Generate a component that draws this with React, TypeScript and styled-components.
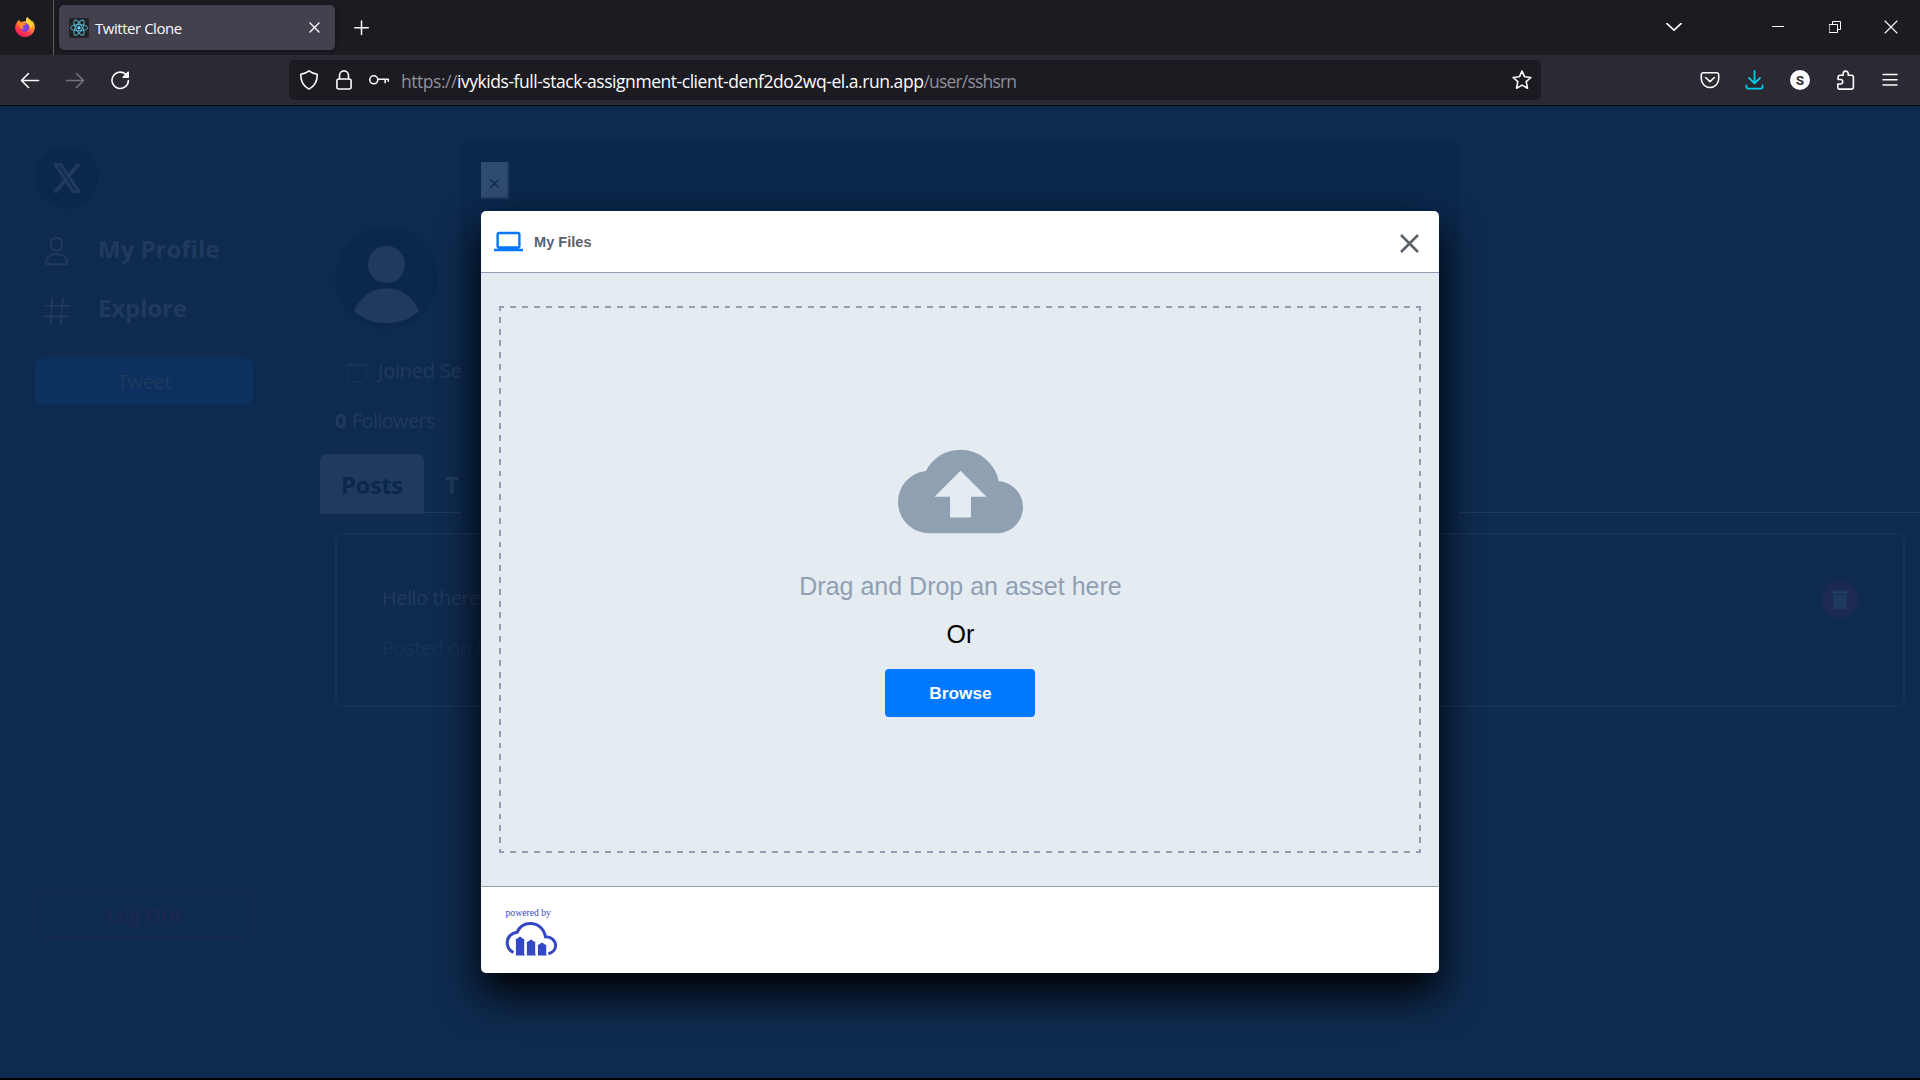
import React from "react";
import styled, { createGlobalStyle } from "styled-components";
import { MdCloudUpload, MdLaptop } from "react-icons/md";

const ui = `"Open Sans", "Noto Sans", sans-serif`;
const arial = `"Liberation Sans", Arial, sans-serif`;

const Global = createGlobalStyle`
  *, *::before, *::after { box-sizing: border-box; }
  body { margin: 0; background: #000; overflow: hidden; }
  svg { display: block; flex: none; }
  button { font: inherit; }
`;

const Screen = styled.div`
  width: 1920px;
  height: 1080px;
  display: flex;
  flex-direction: column;
  font-family: ${ui};
  overflow: hidden;
`;

/* ---------- browser chrome ---------- */
const TabStrip = styled.div`
  height: 55px;
  flex: none;
  display: flex;
  align-items: center;
  background: #1c1b22;
  color: #fbfbfe;
`;
const AppBadge = styled.div`
  width: 54px;
  height: 55px;
  padding: 17px 0 0 15px;
  border-right: 1px solid #5b5a63;
`;
const Tab = styled.div`
  width: 276px;
  height: 45px;
  margin-left: 5px;
  padding: 0 15px 0 10px;
  display: flex;
  align-items: center;
  border-radius: 5px;
  background: #42414d;
  box-shadow: 0 0 4px rgba(0, 0, 0, 0.45);
`;
const TabTitle = styled.span`
  flex: 1;
  padding-left: 6px;
  font-size: 15px;
  line-height: 20px;
  letter-spacing: -0.46px;
`;
const NewTab = styled.div`
  margin-left: 19px;
  flex: 1;
`;
const WindowButtons = styled.div`
  display: flex;
  align-items: center;
  padding-right: 20px;
`;
const Slot = styled.div<{ $gap?: number }>`
  margin-right: ${(p) => p.$gap ?? 0}px;
`;
const Toolbar = styled.div`
  height: 51px;
  flex: none;
  display: flex;
  align-items: center;
  padding: 0 20px;
  background: #2b2a33;
  border-bottom: 1px solid #0c0c12;
  color: #fbfbfe;
`;
const NavButtons = styled.div`
  width: 269px;
  display: flex;
  gap: 25px;
`;
const AddressBar = styled.div`
  width: 1252px;
  height: 40px;
  padding: 0 9px 0 10px;
  display: flex;
  align-items: center;
  border-radius: 5px;
  background: #1c1b22;
`;
const SiteIcons = styled.div`
  display: flex;
  gap: 15px;
  align-items: center;
`;
const Address = styled.span`
  flex: 1;
  margin-left: 12px;
  padding-top: 2px;
  font-size: 17.5px;
  line-height: 24px;
  letter-spacing: -0.46px;
  color: #8f8f98;
  white-space: nowrap;
`;
const Host = styled.span`
  color: #fbfbfe;
`;
const UrlPath = styled.span`
  letter-spacing: -0.8px;
`;
const Extensions = styled.div`
  flex: 1;
  display: flex;
  justify-content: flex-end;
  gap: 25px;
`;

/* ---------- dimmed page ---------- */
const Page = styled.div`
  position: relative;
  height: 972px;
  display: flex;
  background: #0e2a4e;
  color: #203a5e;
  overflow: hidden;
`;
const Sidebar = styled.nav`
  width: 320px;
  padding: 40px 67px 0 35px;
  display: flex;
  flex-direction: column;
`;
const LogoDisc = styled.div`
  width: 63px;
  height: 63px;
  display: grid;
  place-items: center;
  border-radius: 50%;
  background: #0b274c;
`;
const NavList = styled.div`
  margin-top: 19px;
  display: flex;
  flex-direction: column;
  gap: 19px;
`;
const NavItem = styled.div<{ $tracking: number }>`
  height: 40px;
  display: flex;
  align-items: center;
  padding-left: 8px;
  gap: 27px;
  font-size: 24px;
  font-weight: 700;
  letter-spacing: ${(p) => p.$tracking}px;
  svg {
    margin-top: 6px;
  }
`;
const SideButton = styled.button<{ $outlined?: boolean }>`
  width: 218px;
  height: 47px;
  flex: none;
  margin: ${(p) => (p.$outlined ? "auto 0 141px" : "30px 0 0")};
  padding: ${(p) => (p.$outlined ? "1px 0 0" : "2px 0 0")};
  border-radius: 7px;
  border: 1px solid ${(p) => (p.$outlined ? "#1b2950" : "#0c3060")};
  background: ${(p) => (p.$outlined ? "transparent" : "#0c3060")};
  color: ${(p) => (p.$outlined ? "#1b2950" : "#203a5e")};
  font-size: 20px;
  font-weight: ${(p) => (p.$outlined ? 700 : 400)};
  letter-spacing: ${(p) => (p.$outlined ? -0.2 : -0.4)}px;
`;
const Main = styled.main`
  flex: 1;
  padding-top: 120px;
`;
const ProfileHead = styled.section`
  padding-left: 15px;
  font-size: 20px;
  line-height: 28px;
`;
const Joined = styled.div`
  margin-top: 28px;
  padding-left: 12px;
  display: flex;
  gap: 11px;
  letter-spacing: -0.22px;
  svg {
    margin-top: 6px;
  }
`;
const Followers = styled.div`
  margin-top: 22px;
  letter-spacing: -0.65px;
  b {
    margin-right: 1.5px;
  }
`;
const Tabs = styled.div`
  margin-top: 19px;
  height: 60px;
  display: flex;
  font-size: 24px;
  font-weight: 700;
  line-height: 61px;
  background: linear-gradient(#203a5e, #203a5e) 0 58px / 100% 1px no-repeat;
`;
const TabItem = styled.div<{ $active?: boolean }>`
  padding: 0 21px;
  width: ${(p) => (p.$active ? "104px" : "auto")};
  border-radius: 7px 7px 0 0;
  background: ${(p) => (p.$active ? "#203a5e" : "transparent")};
  color: ${(p) => (p.$active ? "#0b274c" : "#203a5e")};
  letter-spacing: ${(p) => (p.$active ? -0.5 : 3)}px;
`;
const Post = styled.article`
  margin: 19px 15px 0;
  height: 174px;
  padding: 45px 45px 0;
  display: flex;
  justify-content: space-between;
  border: 2px solid #163257;
  border-radius: 8px;
  font-size: 20px;
  line-height: 50px;
  letter-spacing: -0.5px;
`;
const PostText = styled.div`
  margin-top: -7.500px;
`;
const PostDate = styled.div`
  color: #163257;
`;
const DeleteButton = styled.div`
  width: 37px;
  height: 39px;
  display: grid;
  place-items: center;
  border-radius: 50%;
  background: #1c2a52;
`;

/* ---------- stacked dialogs ---------- */
const TweetDialog = styled.div`
  position: absolute;
  left: 461px;
  top: 36px;
  width: 998px;
  height: 391px;
  padding: 20px;
  border-radius: 8px;
  background: #0b274c;
`;
const TweetClose = styled.div`
  width: 28px;
  height: 37px;
  padding: 17px 0 0 9px;
  background: #304b70;
  border-right: 2px solid #213c62;
  border-bottom: 2px solid #213c62;
`;
const UploadShadow = styled.div`
  position: absolute;
  left: 481px;
  top: 105px;
  width: 958px;
  height: 762px;
  border-radius: 5px;
  box-shadow: 0 20px 42px 0 #000;
`;
const Upload = styled.div`
  width: 100%;
  height: 100%;
  display: flex;
  flex-direction: column;
  border-radius: 5px;
  overflow: hidden;
  background: #fff;
`;
const UploadHeader = styled.header`
  height: 62px;
  flex: none;
  display: flex;
  align-items: center;
  padding: 0 20px 0 13px;
  border-bottom: 1px solid #90a0b3;
  font: 700 14.6px/20px ${arial};
  color: #5a616a;
`;
const SourceName = styled.span`
  flex: 1;
  margin-left: 11px;
`;
const CloseIcon = styled.div`
  padding-top: 4px;
`;
const UploadBody = styled.div`
  flex: 1;
  padding: 33px 18px;
  display: flex;
  background: #e4ebf1;
`;
/* 6px dashes with 6px gaps, which border-style: dashed cannot give at 2px */
const dashX = `repeating-linear-gradient(90deg, #90a0b3 0 5.96px, transparent 5.96px 11.922px)`;
const dashY = `repeating-linear-gradient(180deg, #90a0b3 0 5.91px, transparent 5.91px 11.826px)`;
const DropZone = styled.div`
  flex: 1;
  padding-top: 123px;
  display: flex;
  flex-direction: column;
  align-items: center;
  background-image: ${dashX}, ${dashX}, ${dashY}, ${dashY};
  background-size: calc(100% + 2px) 2px, calc(100% + 2px) 2px, 2px calc(100% + 2px), 2px calc(100% + 2px);
  background-position: -1px 0, -1px 100%, 0 -1px, 100% -1px;
  background-repeat: no-repeat;
  font: 25px/30px ${arial};
  color: #90a0b3;
`;
const DropHint = styled.div`
  margin-top: 17px;
  padding-left: 1px;
  white-space: nowrap;
`;
const OrText = styled.div`
  margin-top: 18px;
  padding-left: 1px;
  color: #000;
`;
const Browse = styled.button`
  width: 150px;
  height: 48px;
  margin-top: 20px;
  padding: 0 0 0 1px;
  border: 0;
  border-radius: 4px;
  background: #0078ff;
  color: #fff;
  font: 700 17.3px/20px ${arial};
`;
const UploadFooter = styled.footer`
  height: 87px;
  flex: none;
  padding: 19px 24.500px;
  border-top: 1px solid #90a0b3;
  font: 9.7px/14px "Liberation Serif", "Times New Roman", serif;
  color: #3448c5;
  svg {
    margin: 1px 0 0 -0.5px;
  }
`;

type LineProps = { w: number; h: number; sw?: number; color?: string; children: React.ReactNode };
const Line = ({ w, h, sw = 1.6, color = "currentColor", children }: LineProps) => (
  <svg width={w} height={h} viewBox={`0 0 ${w} ${h}`} fill="none" stroke={color} strokeWidth={sw} strokeLinecap="round" strokeLinejoin="round">
    {children}
  </svg>
);

const FirefoxLogo = () => (
  <svg width="20" height="20" viewBox="0 0 20 20">
    <defs>
      <linearGradient id="fx" x1="0.8" y1="0.05" x2="0.3" y2="1">
        <stop offset="0" stopColor="#fff44f" />
        <stop offset="0.35" stopColor="#ff9a2e" />
        <stop offset="0.7" stopColor="#ff3d4a" />
        <stop offset="1" stopColor="#f5156c" />
      </linearGradient>
    </defs>
    <path d="M12.3 0c-1.2 1.4-1.4 2.9-1 4L5.900 5.100C5 4.700 4.500 3.800 4.500 2.800 2.700 4 .3 7 .2 10.600.2 15.800 4.600 20 10 20s9.800-4.200 9.800-9.700c0-3.200-1.300-5.400-2.700-6.500l.3 1.500C16.400 2.600 13.700 2.200 12.300 0z" fill="url(#fx)" />
    <circle cx="10" cy="10.500" r="4.200" fill="#7a3fe0" />
    <path d="M3.500 5.500c2.500-.8 4.200-.2 5 .9.600.2 1.900.1 2.200.6 0 .9-1.700 1.400-2.500 2-.8.800-.2 2.500 1.500 2.600-2.200 1.100-5-.2-5.600-3z" fill="#ff9028" />
    <path d="M12.400.3c.3 2.600 4.400 4 4.400 8 .5 1.400-.6 3.100-1.400 3.700.2-3.500-1.600-5.400-4-6.400C10.800 3.300 11.400 1.300 12.400.3z" fill="#ffd83a" />
  </svg>
);

const ReactIcon = () => (
  <svg width="20" height="20" viewBox="0 0 20 20">
    <rect width="20" height="20" rx="2" fill="#222" />
    <g fill="none" stroke="#53b5d3" strokeWidth="1">
      <ellipse cx="10" cy="9.700" rx="8.600" ry="3.200" />
      <ellipse cx="10" cy="9.700" rx="8.600" ry="3.200" transform="rotate(60 10 9.700)" />
      <ellipse cx="10" cy="9.700" rx="8.600" ry="3.200" transform="rotate(120 10 9.700)" />
    </g>
    <circle cx="10" cy="9.700" r="1.700" fill="#61dafb" />
  </svg>
);

const CloudinaryLogo = () => (
  <svg width="54" height="36" viewBox="0 0 54 36">
    <path d="M8.500 31.500C4 29.500 2.200 25.500 2.200 21.600c0-5.400 4.200-9.800 9.800-10.300C14.300 5.800 19.400 2.400 25.500 2.400c7.400 0 13.600 5.200 14.900 13.400 5.500-.2 10.200 3.500 10.200 9 0 3.800-3 7-7.200 8" fill="none" stroke="#3448c5" strokeWidth="3" />
    <g fill="#3448c5">
      <path d="M15 15.600l5 3.300h-.8v14.300l.9 1.300h-9.200V18.900H10z" />
      <path d="M26 18.400l5 3.300h-.8v11.500l.9 1.300h-9.200V21.700H21z" />
      <path d="M37 21.400l5 3.300h-.8v8.500l.9 1.300h-9.200v-9.800H32z" />
    </g>
  </svg>
);

export default function App() {
  return (
    <Screen>
      <Global />
      <TabStrip>
        <AppBadge><FirefoxLogo /></AppBadge>
        <Tab>
          <ReactIcon />
          <TabTitle>Twitter Clone</TabTitle>
          <Line w={11} h={11} sw={1.4}><path d="M1 1l9 9M10 1l-9 9" /></Line>
        </Tab>
        <NewTab><Line w={16} h={16} sw={1.5}><path d="M7.500 1v13.500M.8 7.700h13.500" /></Line></NewTab>
        <WindowButtons>
          <Slot $gap={90}><Line w={16} h={10} sw={1.7}><path d="M1 .7l7 6.500 7-6.500" /></Line></Slot>
          <Slot $gap={45}><Line w={12} h={4} sw={1}><path d="M0 .5h12" strokeLinecap="butt" /></Line></Slot>
          <Slot $gap={42}>
            <Line w={13} h={13} sw={1}><path d="M.5 3.500h8v8h-8zM3.500 3.500v-3h8v8h-3" strokeLinejoin="miter" /></Line>
          </Slot>
          <Slot $gap={2}><Line w={14} h={15} sw={1.1}><path d="M1 1l12 12M13 1L1 13" /></Line></Slot>
        </WindowButtons>
      </TabStrip>

      <Toolbar>
        <NavButtons>
          <Line w={20} h={20}><path d="M18.500 10.500H2M8.500 3.500l-7 7 7 7" /></Line>
          <Line w={20} h={20} color="#73727b"><path d="M1.500 10.500H18M11.500 3.500l7 7-7 7" /></Line>
          <Line w={20} h={20}><path d="M18.400 10.500a8.200 8.200 0 1 1-2.600-6.200" /><path d="M18.200 2.200v5h-5z" fill="currentColor" /></Line>
        </NavButtons>
        <AddressBar>
          <SiteIcons>
            <Line w={20} h={20}><path d="M10 .9c2.800 2.300 5.400 3 8.200 3.300.3 6.500-2 11.500-8.200 14.900C3.800 15.700 1.500 10.700 1.800 4.200 4.600 3.900 7.200 3.200 10 .9z" /></Line>
            <Line w={20} h={20}><rect x="2.900" y="9" width="14.200" height="10" rx="2" /><path d="M5.500 9V5.400a4.500 4.500 0 0 1 9 0V9" /></Line>
            <Line w={20} h={20}><circle cx="4.800" cy="9.800" r="4" /><path d="M9 9.200h10.300v2M16.200 9.200v3.600" /></Line>
          </SiteIcons>
          <Address>https://<Host>ivykids-full-stack-assignment-client-denf2do2wq-el.a.run.app</Host><UrlPath>/user/sshsrn</UrlPath></Address>
          <Line w={20} h={20}><path d="M10 1.100l2.500 5.600 6.400.8-4.700 4.200 1.300 6.500L10 15.100l-5.500 3.100 1.300-6.500L1.100 7.500l6.400-.8z" /></Line>
        </AddressBar>
        <Extensions>
          <Line w={20} h={20}><path d="M3 2.800h14a1.800 1.800 0 0 1 1.700 1.700v4.200c0 5-4 8.800-8.700 8.800S1.300 13.700 1.300 8.700V4.500A1.800 1.800 0 0 1 3 2.800z" /><path d="M5.600 7.500L10 11.700l4.400-4.200" /></Line>
          <Line w={20} h={20} sw={1.8} color="#00ccec"><path d="M9.500 1v12M4 8l5.500 5.300L15 8M1.400 15.500v1.300a1.800 1.800 0 0 0 1.800 1.800h12.600a1.800 1.800 0 0 0 1.800-1.800v-1.300" /></Line>
          <svg width="20" height="20" viewBox="0 0 20 20">
            <circle cx="10" cy="10" r="10" fill="#fbfbfe" />
            <text x="10" y="14.600" textAnchor="middle" fontFamily="Roboto, sans-serif" fontWeight="700" fontSize="13" fill="#2b2a33">S</text>
          </svg>
          <Line w={20} h={20}><path d="M4.200 19.100h12.200a2 2 0 0 0 2-2V7.300a2 2 0 0 0-2-2h-3.200V3.600a2.500 2.500 0 0 0-5 0v1.700H5.100a2 2 0 0 0-2 2v2.200h2.400a2.200 2.200 0 0 1 0 4.500H2.800v3.600c0 1 .5 1.500 1.400 1.500z" /></Line>
          <Line w={20} h={20} sw={1.5}><path d="M3 4.500h14M3 9.700h14M3 15h14" /></Line>
        </Extensions>
      </Toolbar>

      <Page>
        <Sidebar>
          <LogoDisc>
            <svg width="30" height="32" viewBox="0 0 30 32" fill="none" stroke="#203a5e" strokeLinejoin="round" strokeLinecap="round">
              <path d="M3 2.300h5.500l18.500 27.400h-5.500z" strokeWidth="3.200" />
              <path d="M26 2.900L18 12.200M4 29.100l8.300-9.800" strokeWidth="4" />
            </svg>
          </LogoDisc>
          <NavList>
            <NavItem $tracking={0}>
              <Line w={28} h={30} sw={1.9}>
                <path d="M13.500 1.800c3.800 0 5.800 2.800 5.700 6.300-.1 4-2.300 6.500-5.700 6.500s-5.600-2.500-5.700-6.500C7.700 4.600 9.700 1.800 13.500 1.800zM13.500 18c6.600 0 10.300 3.700 10.800 8.300.1 1.300-.5 2-1.800 2H4.500c-1.300 0-1.900-.7-1.800-2C3.200 21.700 6.900 18 13.500 18z" />
              </Line>
              My Profile
            </NavItem>
            <NavItem $tracking={-0.15}>
              <Line w={28} h={30} sw={1.8}><path d="M9.200 3.500L7.600 29M20 3.500L17.800 29M1.500 10.600h25M.9 21.500h24.500" /></Line>
              Explore
            </NavItem>
          </NavList>
          <SideButton>Tweet</SideButton>
          <SideButton $outlined>Log Out</SideButton>
        </Sidebar>
        <Main>
          <ProfileHead>
            <svg width="103" height="103" viewBox="0 0 103 103">
              <circle cx="51.500" cy="51.500" r="51.500" fill="#0b274c" />
              <circle cx="51.500" cy="38.500" r="18.600" fill="#203a5e" />
              <path d="M19 85C25.500 70.500 37 62.300 51.500 62.300S77.500 70.500 84 85C75 93.500 63.500 97.300 51.500 97.300S28 93.500 19 85z" fill="#203a5e" />
            </svg>
            <Joined>
              <Line w={20} h={20} sw={1.5} color="#163257"><rect x="1" y="1" width="18" height="18" rx="1" /><path d="M1.500 2.300h17" strokeWidth="3" /></Line>
              Joined September 2023
            </Joined>
            <Followers><b>0</b> Followers</Followers>
          </ProfileHead>
          <Tabs>
            <TabItem $active>Posts</TabItem>
            <TabItem>Tweets</TabItem>
          </Tabs>
          <Post>
            <PostText>
              <div>Hello there</div>
              <PostDate>Posted on Fri</PostDate>
            </PostText>
            <DeleteButton>
              <svg width="16" height="19" viewBox="0 0 16 19" fill="#203a5e">
                <path d="M5 0h6v1h5v3H0V1h5zM1 5h14l-.6 12.500a1.500 1.500 0 0 1-1.500 1.500H3.100a1.500 1.500 0 0 1-1.500-1.500z" />
              </svg>
            </DeleteButton>
          </Post>
        </Main>

        <TweetDialog>
          <TweetClose><Line w={9} h={9} sw={1.3} color="#0e2a50"><path d="M.7.7l7.600 7.600M8.300.7L.7 8.300" /></Line></TweetClose>
        </TweetDialog>
        <UploadShadow>
          <Upload>
            <UploadHeader>
              <MdLaptop size={29} color="#0078ff" />
              <SourceName>My Files</SourceName>
              <CloseIcon>
                <Line w={19} h={19} sw={2.5} color="#5a616a"><path d="M1 1l17 17M18 1L1 18" strokeLinecap="butt" /></Line>
              </CloseIcon>
            </UploadHeader>
            <UploadBody>
              <DropZone>
                <MdCloudUpload size={125} />
                <DropHint>Drag and Drop an asset here</DropHint>
                <OrText>Or</OrText>
                <Browse>Browse</Browse>
              </DropZone>
            </UploadBody>
            <UploadFooter>
              powered by
              <CloudinaryLogo />
            </UploadFooter>
          </Upload>
        </UploadShadow>
      </Page>
    </Screen>
  );
}
